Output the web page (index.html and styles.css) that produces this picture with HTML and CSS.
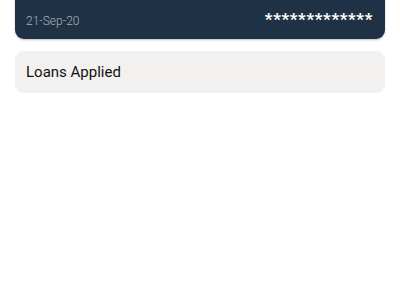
FILE: index.html
```html
<!DOCTYPE html>
<html>
  <head>
    <title>Account</title>
    <link rel="stylesheet" href="styles.css">
  </head>
  <body>
    <div class="page">
      <div class="account-card">
        <div class="card-row">
          <span class="date">21-Sep-20</span>
          <span class="masked">*************</span>
        </div>
      </div>

      <div class="section">
        <span class="section-title">Loans Applied</span>
      </div>
    </div>
  </body>
</html>
```

FILE: styles.css
```css
body {
  margin: 0;
  font-family: Roboto, "Noto Sans", sans-serif;
  background: #ffffff;
}

.page {
  padding: 0 15px;
}

.account-card {
  margin-top: -21px;
  padding: 30px 12px 10px 11px;
  background-color: #1f3245;
  border-radius: 9px;
  box-shadow: 0 1px 2px rgba(0, 0, 0, 0.25);
}

.card-row {
  display: flex;
  justify-content: space-between;
  align-items: baseline;
}

.date {
  font-size: 12px;
  font-weight: 300;
  color: #a7b0ba;
}

.masked {
  font-size: 17px;
  font-weight: 700;
  letter-spacing: 0.6px;
  color: #ffffff;
}

.section {
  margin-top: 12px;
  height: 42px;
  display: flex;
  align-items: center;
  padding: 0 11px;
  background-color: #f2f1ef;
  border-radius: 9px;
}

.section-title {
  font-size: 15px;
  color: #111111;
}
```
